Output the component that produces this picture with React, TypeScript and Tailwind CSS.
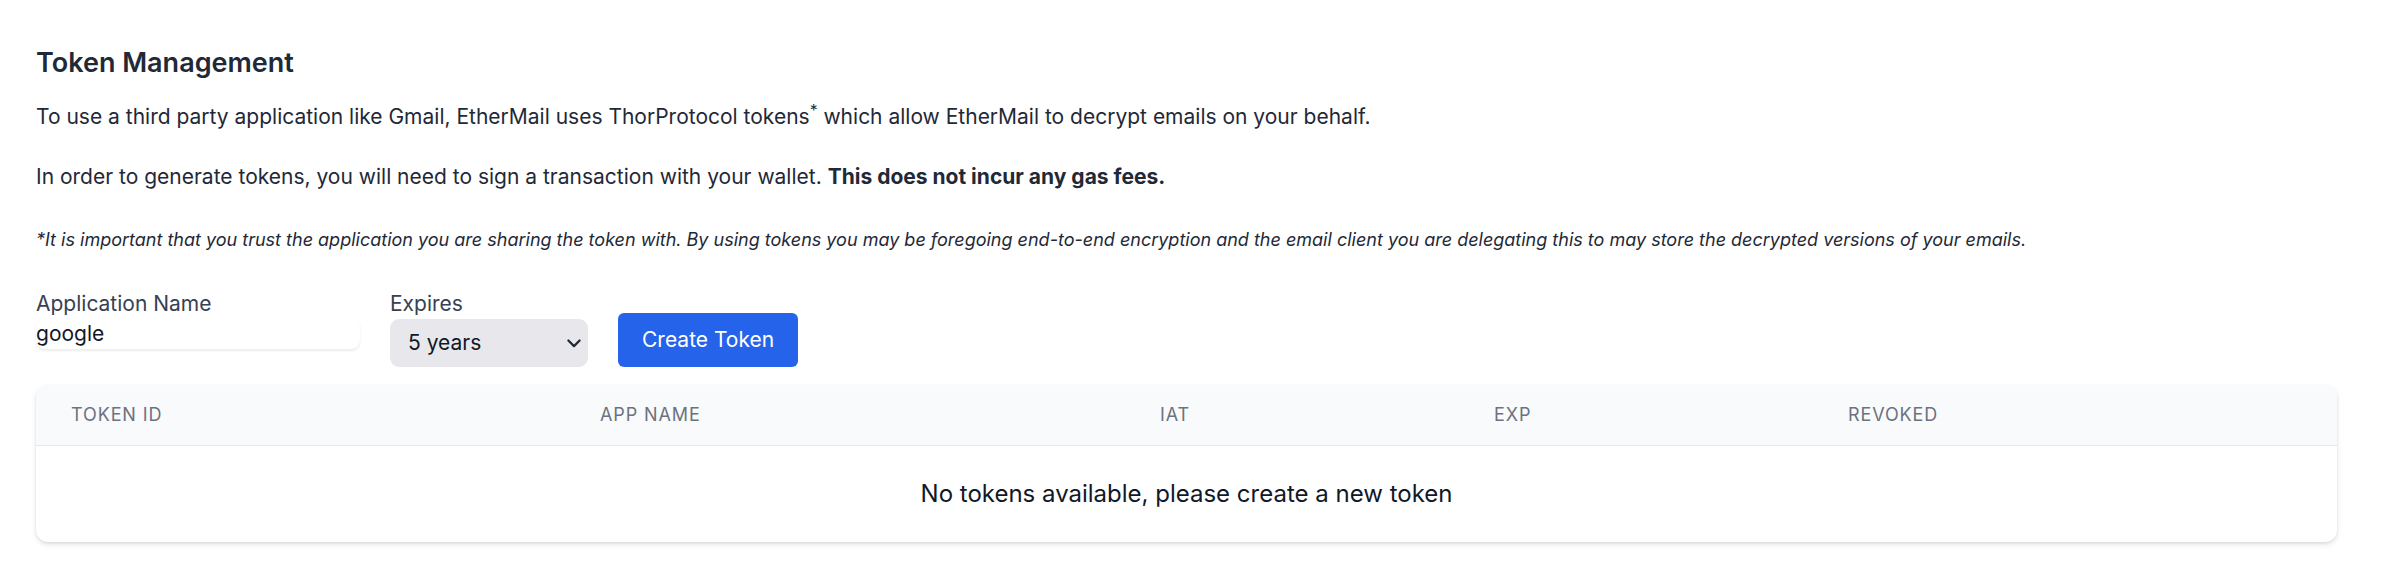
import React, { useState } from 'react';

const columns = [
  { label: 'Token ID', width: 'w-[529px]' },
  { label: 'App Name', width: 'w-[560px]' },
  { label: 'IAT', width: 'w-[334px]' },
  { label: 'Exp', width: 'w-[354px]' },
  { label: 'Revoked', width: 'w-[524px]' },
];

const expiryOptions = ['1 day', '1 week', '1 month', '1 year', '5 years'];

const App: React.FC = () => {
  const [appName, setAppName] = useState('google');
  const [expires, setExpires] = useState('5 years');

  return (
    <div className="min-h-screen bg-white px-[36px] pt-[42px] font-['Inter','Noto_Sans',sans-serif] text-[#1f2937]">
      <h2 className="text-[27px] leading-[42px] font-semibold text-[#1f2937]">Token Management</h2>

      <p className="mt-[18px] text-[21px] leading-[30px]">
        To use a third party application like Gmail, EtherMail uses ThorProtocol tokens<sup>*</sup> which allow
        EtherMail to decrypt emails on your behalf.
      </p>
      <p className="mt-[30px] text-[21px] leading-[30px]">
        In order to generate tokens, you will need to sign a transaction with your wallet.{' '}
        <span className="font-bold">This does not incur any gas fees.</span>
      </p>

      <p className="mt-[36px] text-[18px] leading-[24px] italic">
        *It is important that you trust the application you are sharing the token with. By using tokens you may be
        foregoing end-to-end encryption and the email client you are delegating this to may store the decrypted
        versions of your emails.
      </p>

      <div className="mt-[37px] flex items-start gap-[30px]">
        <label className="flex flex-col text-[21px] leading-[30px] text-[#374151]">
          Application Name
          <input
            value={appName}
            onChange={(e) => setAppName(e.target.value)}
            className="w-[324px] rounded-[9px] bg-white text-[21px] leading-[30px] text-[#111827] shadow-[0_1.5px_3px_rgba(0,0,0,0.08)] outline-none"
          />
        </label>

        <label className="flex flex-col text-[21px] leading-[30px] text-[#374151]">
          Expires
          <div className="relative">
            <select
              value={expires}
              onChange={(e) => setExpires(e.target.value)}
              className="h-[48px] w-[198px] appearance-none rounded-[9px] bg-[#e8e8ec] pl-[18px] pr-[36px] text-[21px] leading-[30px] text-[#111827] outline-none"
            >
              {expiryOptions.map((opt) => (
                <option key={opt}>{opt}</option>
              ))}
            </select>
            <svg
              className="pointer-events-none absolute right-[4px] top-1/2 -translate-y-1/2 text-[#1f2937]"
              width="20"
              height="20"
              viewBox="0 0 16 16"
              fill="none"
              stroke="currentColor"
              strokeWidth="1.8"
              strokeLinecap="round"
              strokeLinejoin="round"
            >
              <path d="M3.5 6l4.5 4.5L12.5 6" />
            </svg>
          </div>
        </label>

        <button className="h-[54px] self-end rounded-[6px] bg-[#2563eb] px-[24px] text-[21px] leading-[30px] text-white">
          Create Token
        </button>
      </div>

      <div className="mt-[18px] w-[2301px] overflow-hidden rounded-[12px] bg-white shadow-[0_3px_6px_-1px_rgba(0,0,0,0.12),0_1px_3px_rgba(0,0,0,0.08)]">
        <table className="w-full table-fixed border-collapse">
          <thead className="bg-[#f9fafb]">
            <tr className="border-b-[1.5px] border-[#e5e7eb]">
              {columns.map((col) => (
                <th
                  key={col.label}
                  className={`${col.width} px-[35px] py-[18px] text-left text-[18px] leading-[24px] font-normal tracking-wider text-[#6b7280] uppercase`}
                >
                  {col.label}
                </th>
              ))}
            </tr>
          </thead>
          <tbody>
            <tr>
              <td colSpan={5} className="py-[30px] text-center text-[24px] leading-[36px] text-[#111827]">
                No tokens available, please create a new token
              </td>
            </tr>
          </tbody>
        </table>
      </div>
    </div>
  );
};

export default App;
